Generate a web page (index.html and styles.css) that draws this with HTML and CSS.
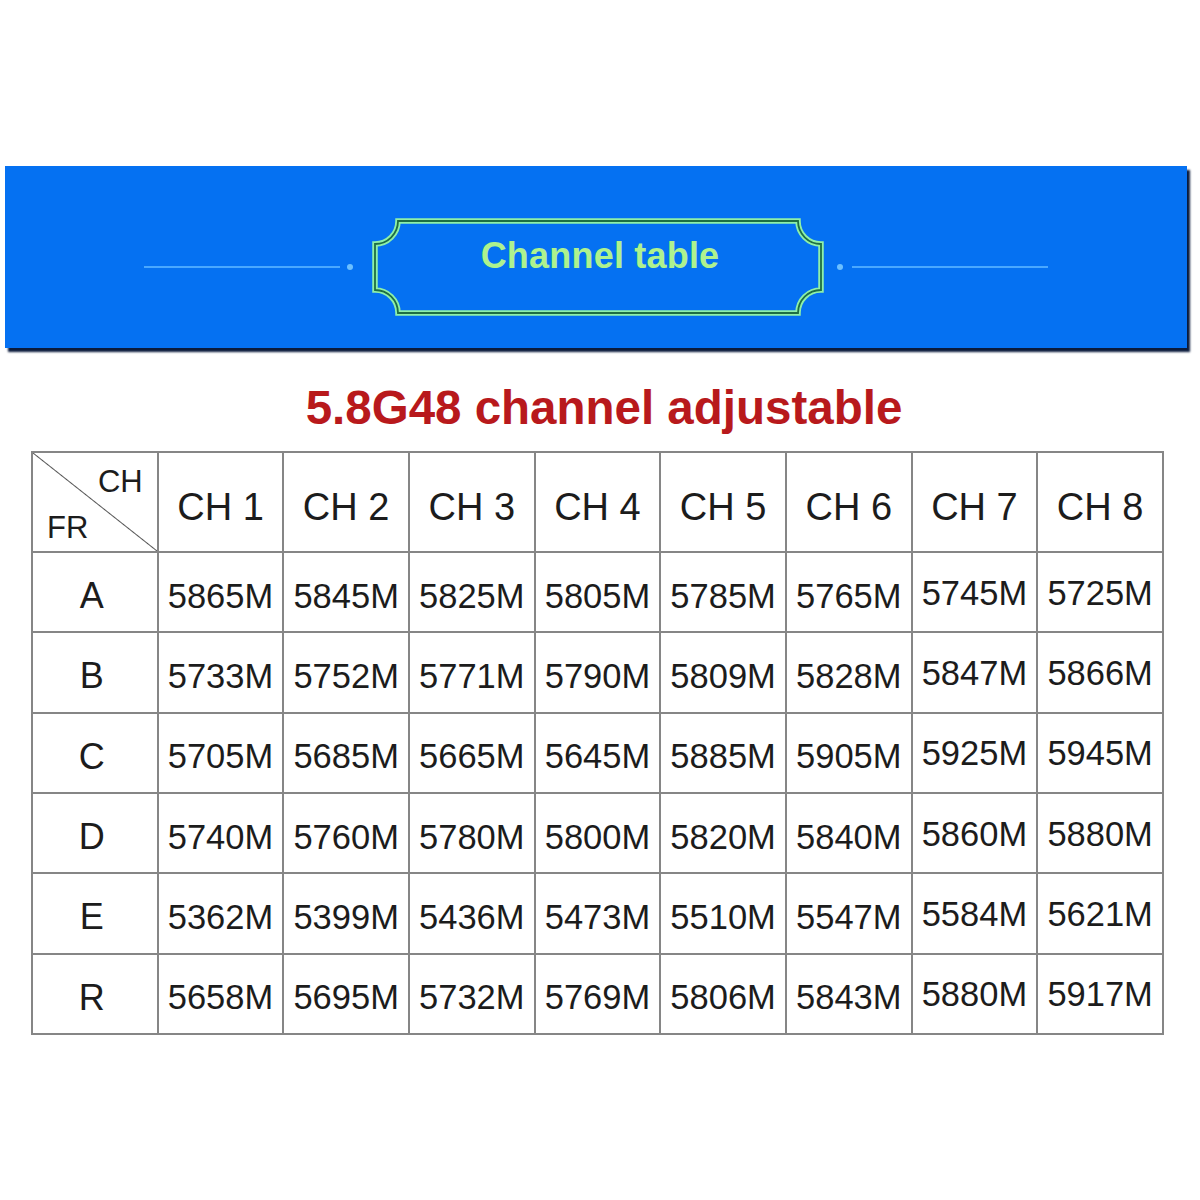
FILE: index.html
```html
<!DOCTYPE html>
<html>
<head>
<meta charset="utf-8">
<link rel="stylesheet" href="styles.css">
</head>
<body>
<div class="page">
  <div class="banner">
    <div class="deco">
      <span class="line"></span>
      <span class="dot dot-l"></span>
      <div class="frame">
        <svg class="frame-svg" width="452" height="98" viewBox="0 0 452 98">
          <path d="M26 3 H426 A23 23 0 0 0 449 26 V72 A23 23 0 0 0 426 95 H26 A23 23 0 0 0 3 72 V26 A23 23 0 0 0 26 3 Z" fill="none" stroke="#8ef0a8" stroke-width="5.5"/>
          <path d="M26 3 H426 A23 23 0 0 0 449 26 V72 A23 23 0 0 0 426 95 H26 A23 23 0 0 0 3 72 V26 A23 23 0 0 0 26 3 Z" fill="none" stroke="#1d6e44" stroke-width="1.8"/>
        </svg>
        <span class="frame-text">Channel table</span>
      </div>
      <span class="dot dot-r"></span>
      <span class="line"></span>
    </div>
  </div>
  <h1 class="title">5.8G48 channel adjustable</h1>
  <table class="ch-table">
    <tr class="head">
      <td class="corner"><span class="c-ch">CH</span><span class="c-fr">FR</span></td>
      <td>CH 1</td><td>CH 2</td><td>CH 3</td><td>CH 4</td><td>CH 5</td><td>CH 6</td><td>CH 7</td><td>CH 8</td>
    </tr>
    <tr><td class="band">A</td><td>5865M</td><td>5845M</td><td>5825M</td><td>5805M</td><td>5785M</td><td>5765M</td><td class="hi">5745M</td><td class="hi">5725M</td></tr>
    <tr><td class="band">B</td><td>5733M</td><td>5752M</td><td>5771M</td><td>5790M</td><td>5809M</td><td>5828M</td><td class="hi">5847M</td><td class="hi">5866M</td></tr>
    <tr><td class="band">C</td><td>5705M</td><td>5685M</td><td>5665M</td><td>5645M</td><td>5885M</td><td>5905M</td><td class="hi">5925M</td><td class="hi">5945M</td></tr>
    <tr><td class="band">D</td><td>5740M</td><td>5760M</td><td>5780M</td><td>5800M</td><td>5820M</td><td>5840M</td><td class="hi">5860M</td><td class="hi">5880M</td></tr>
    <tr><td class="band">E</td><td>5362M</td><td>5399M</td><td>5436M</td><td>5473M</td><td>5510M</td><td>5547M</td><td class="hi">5584M</td><td class="hi">5621M</td></tr>
    <tr><td class="band">R</td><td>5658M</td><td>5695M</td><td>5732M</td><td>5769M</td><td>5806M</td><td>5843M</td><td class="hi">5880M</td><td class="hi">5917M</td></tr>
  </table>
</div>
</body>
</html>
```
FILE: styles.css
```css
html, body {
  margin: 0;
  padding: 0;
  background: #ffffff;
}
.page {
  width: 1200px;
  padding-top: 166px;
  font-family: "Liberation Sans", Arial, sans-serif;
}
.banner {
  margin-left: 5px;
  width: 1182px;
  height: 182px;
  background: #0571f2;
  box-shadow: 3px 4px 2px #0b1b3c;
  display: flex;
  align-items: center;
  justify-content: center;
  padding-top: 20px;
  box-sizing: border-box;
}
.deco {
  display: flex;
  align-items: center;
}
.line {
  display: block;
  width: 196px;
  height: 2px;
  background: #4aa8ff;
}
.dot {
  display: block;
  width: 6px;
  height: 6px;
  border-radius: 50%;
  background: #6cc0ff;
}
.dot-l { margin: 0 19px 0 7px; }
.dot-r { margin: 0 9px 0 13px; }
.frame {
  position: relative;
  width: 452px;
  height: 98px;
  display: flex;
  align-items: center;
  justify-content: center;
}
.frame-svg {
  position: absolute;
  left: 0;
  top: 0;
}
.frame-text {
  position: relative;
  color: #aef28e;
  font-weight: bold;
  font-size: 36px;
  margin-top: -22px;
  margin-left: 4px;
  letter-spacing: 0.2px;
}
.title {
  margin: 31px 0 14px 0;
  text-align: center;
  padding-left: 8px;
  color: #b8191c;
  font-size: 47.5px;
  line-height: 58px;
  font-weight: bold;
}
.ch-table {
  margin-left: 31px;
  border-collapse: collapse;
  table-layout: fixed;
  width: 1133px;
  color: #1c1c1c;
}
.ch-table td {
  border: 2px solid #868686;
  height: 80.33px;
  padding: 8px 0 0 0;
  text-align: center;
  vertical-align: middle;
  font-size: 34.5px;
  box-sizing: border-box;
}
.ch-table td.hi { padding-top: 2px; }
.ch-table tr.head td {
  height: 100px;
  font-size: 38px;
  padding-top: 10px;
}
.ch-table td.band {
  font-size: 36px;
  padding-right: 6px;
}
.ch-table tr.head td.corner {
  padding: 0;
  font-size: 31px;
  background: linear-gradient(to top right, transparent calc(50% - 1px), #555 50%, transparent calc(50% + 1px));
  vertical-align: top;
  text-align: left;
}
.c-ch {
  display: block;
  text-align: right;
  padding: 11px 14px 0 0;
  line-height: 36px;
}
.c-fr {
  display: block;
  text-align: left;
  padding: 10px 0 0 14px;
  line-height: 36px;
}
```
